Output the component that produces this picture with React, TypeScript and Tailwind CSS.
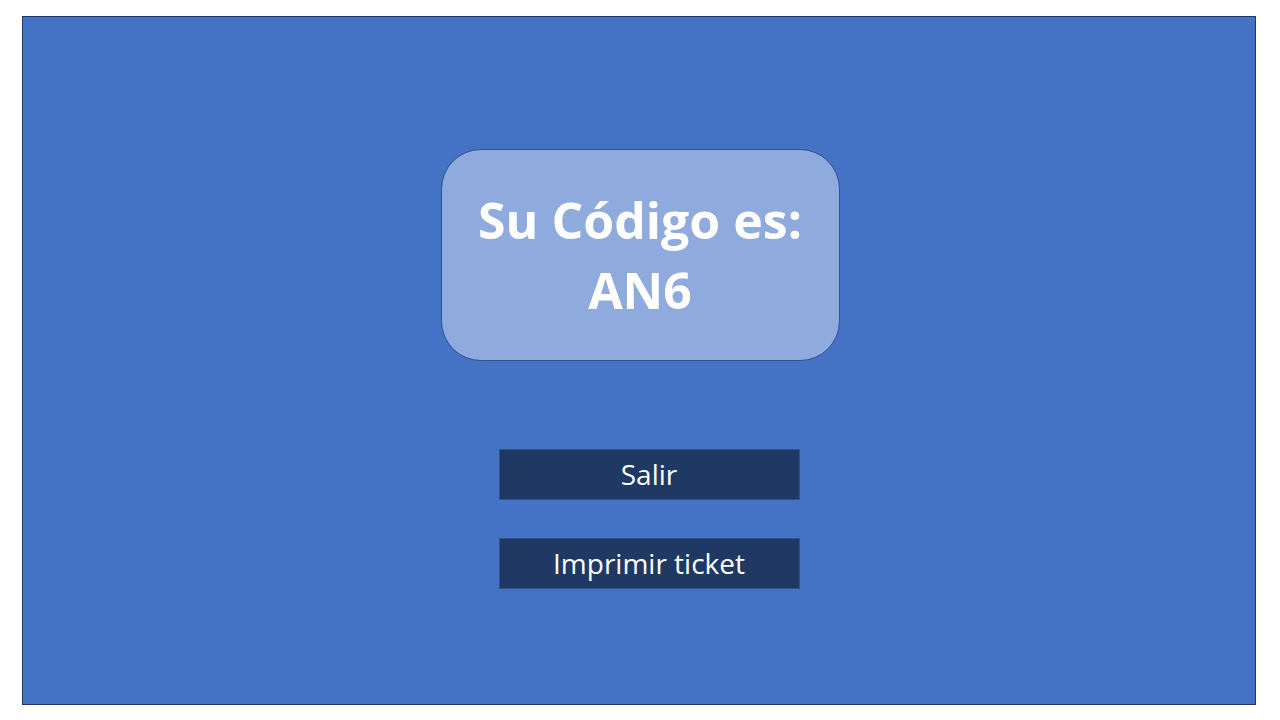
import React from "react";

const App = () => {
  return (
    <div className="w-[1280px] h-[720px] bg-white pt-4 pl-[22px] font-['Open_Sans',sans-serif]">
      <div className="w-[1234px] h-[689px] bg-[#4472c4] border border-[#1f3864] flex flex-col items-center">
        <div className="mt-[132px] ml-[2px] w-[399px] h-[212px] rounded-[40px] bg-[#8faadc] border border-[#2f528f] flex flex-col items-center justify-center text-white font-bold text-[50px] leading-[70px]">
          <span>Su Código es:</span>
          <span>AN6</span>
        </div>
        <button className="mt-[88px] ml-[20px] w-[301px] h-[51px] bg-[#203864] border border-[#2f528f] text-white text-[28px] leading-[49px] pb-[2px]">
          Salir
        </button>
        <button className="mt-[38px] ml-[20px] w-[301px] h-[51px] bg-[#203864] border border-[#2f528f] text-white text-[28px] leading-[49px] pb-[2px]">
          Imprimir ticket
        </button>
      </div>
    </div>
  );
};

export default App;
